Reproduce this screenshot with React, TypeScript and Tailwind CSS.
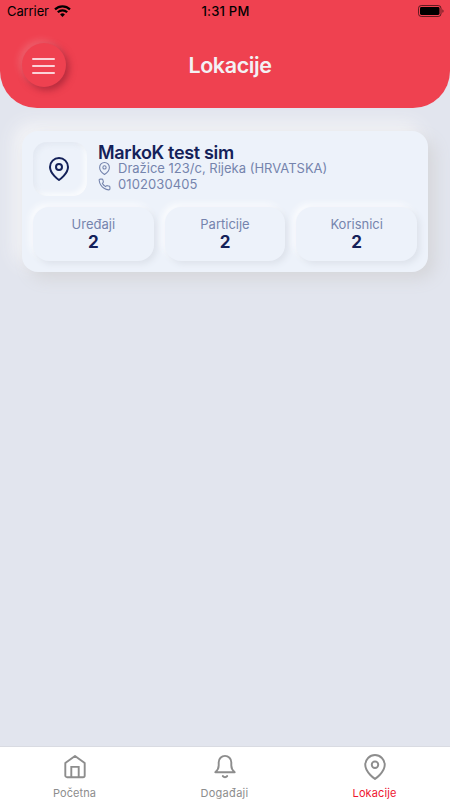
import React from "react";

const stats = [
  { label: "Uređaji", value: 2 },
  { label: "Particije", value: 2 },
  { label: "Korisnici", value: 2 },
];

function Svg({ size, stroke = 2, box = 24, children }: any) {
  return (
    <svg
      width={size}
      height={size}
      viewBox={`0 0 ${box} ${box}`}
      fill="none"
      stroke="currentColor"
      strokeWidth={stroke}
      strokeLinecap="round"
      strokeLinejoin="round"
      className="shrink-0 overflow-visible"
    >
      {children}
    </svg>
  );
}

function Pin({ size, stroke }: any) {
  return (
    <Svg size={size} stroke={stroke}>
      <path d="M21 10c0 7-9 13-9 13s-9-6-9-13a9 9 0 0 1 18 0z" />
      <circle cx="12" cy="10" r="3" />
    </Svg>
  );
}

function Phone({ size, stroke }: any) {
  return (
    <Svg size={size} stroke={stroke}>
      <path d="M22 16.92v3a2 2 0 0 1-2.18 2 19.79 19.79 0 0 1-8.63-3.07 19.5 19.5 0 0 1-6-6 19.79 19.79 0 0 1-3.07-8.67A2 2 0 0 1 4.11 2h3a2 2 0 0 1 2 1.72 12.84 12.84 0 0 0 .7 2.81 2 2 0 0 1-.45 2.11L8.09 9.91a16 16 0 0 0 6 6l1.27-1.27a2 2 0 0 1 2.11-.45 12.84 12.84 0 0 0 2.81.7A2 2 0 0 1 22 16.92z" />
    </Svg>
  );
}

function Home() {
  return (
    <Svg size={26} stroke={1.9} box={26}>
      <path d="M13 1.9L3.3 9.1v12.3a1.8 1.8 0 0 0 1.8 1.8h15.8a1.8 1.8 0 0 0 1.8-1.8V9.1z" />
      <path d="M9.3 23V12.9h7.4V23" strokeLinejoin="miter" />
    </Svg>
  );
}

function Bell() {
  return (
    <Svg size={26} stroke={1.9} box={26}>
      <path d="M3.3 18.2h19.4c-2.1-1.6-3.4-3.4-3.4-6.6V8.2a6.3 6.3 0 0 0-12.6 0v3.4c0 3.2-1.3 5-3.4 6.6z" />
      <path d="M10.9 22.2c1.1 1.4 3.1 1.4 4.2 0" strokeWidth="2.1" />
    </Svg>
  );
}

function StatusBar() {
  return (
    <div className="grid h-[22px] grid-cols-3 items-center pr-[6px] pl-[7px] text-[13px] text-black">
      <div className="flex items-center gap-[5px]">
        <span className="pt-[2px] tracking-[-0.1px]">Carrier</span>
        <svg width="17" height="12" viewBox="0 0 17 12" fill="none" stroke="#000" strokeWidth="2.2">
          <path d="M1 4.4a10.8 10.8 0 0 1 15 0" />
          <path d="M3.8 7.2a6.8 6.8 0 0 1 9.4 0" />
          <path d="M8.5 12L6.1 9.5a3.5 3.5 0 0 1 4.8 0z" fill="#000" stroke="none" />
        </svg>
      </div>
      <span className="pt-[2px] text-center font-medium tracking-[0.2px]">1:31 PM</span>
      <svg className="justify-self-end" width="26" height="12" viewBox="0 0 26 12">
        <rect x="0.5" y="0.5" width="22.5" height="11" rx="2.8" fill="none" stroke="#000" strokeOpacity="0.6" />
        <rect x="2" y="2" width="19.5" height="8" rx="1.4" fill="#000" />
        <path d="M24.5 4.2c1.3.5 1.3 3.1 0 3.6z" fill="#000" fillOpacity="0.7" />
      </svg>
    </div>
  );
}

function Header() {
  return (
    <header className="relative z-10 h-[108px] rounded-b-[37px] bg-[#ef4150]">
      <StatusBar />
      <div className="flex h-[86px] items-center px-[22px]">
        <button
          type="button"
          className="flex h-11 w-11 flex-col items-center justify-center gap-[5px] rounded-full bg-[#ef4150] pr-px pt-px shadow-[3px_3px_7px_rgba(120,20,40,0.5),-3px_-3px_7px_rgba(255,255,255,0.17)]"
        >
          <span className="h-[2px] w-[23px] rounded-full bg-[#fbd3d8]"></span>
          <span className="h-[2px] w-[23px] rounded-full bg-[#fbd3d8]"></span>
          <span className="h-[2px] w-[23px] rounded-full bg-[#fbd3d8]"></span>
        </button>
        <h1 className="flex-1 pr-[34px] text-center text-[21.5px] font-semibold tracking-[-0.4px] text-[#f3f1f4]">
          Lokacije
        </h1>
      </div>
    </header>
  );
}

function LocationCard() {
  return (
    <div className="mx-[22px] mt-[23px] h-[141px] rounded-2xl bg-[#edf2fa] p-[11px] shadow-[7px_7px_16px_#d5d6da,-7px_-7px_18px_#f6f6f8]">
      <div className="flex gap-[11px]">
        <div className="flex h-[54px] w-[54px] items-center justify-center rounded-[14px] pr-[2px] text-[#142159] shadow-[inset_3px_3px_5px_rgba(205,212,226,0.3),inset_-3px_-3px_5px_rgba(255,255,255,0.7)]">
          <Pin size={24} stroke={2} />
        </div>
        <div className="flex flex-col whitespace-nowrap text-[#7584ad]">
          <p className="mt-[2px] h-4 text-[18px] leading-[18px] font-semibold tracking-[-0.33px] text-[#142159]">
            MarkoK test sim
          </p>
          <div className="flex h-4 items-center gap-[7px] text-[13px] leading-4">
            <Pin size={13} stroke={2} />
            <span>Dražice 123/c, Rijeka (HRVATSKA)</span>
          </div>
          <div className="flex h-4 items-center gap-[7px] text-[13px] leading-4 tracking-[0.1px]">
            <Phone size={13} stroke={2} />
            <span>0102030405</span>
          </div>
        </div>
      </div>
      <div className="mt-[11px] grid grid-cols-3 gap-[11px]">
        {stats.map((item) => (
          <div
            key={item.label}
            className="flex h-[54px] flex-col items-center justify-center rounded-2xl bg-[#edf2fa] pb-[2px] shadow-[3px_3px_6px_#dde2eb,-3px_-3px_6px_#fbfcfe]"
          >
            <span className="text-[13px] leading-[18px] text-[#7584ad]">{item.label}</span>
            <span className="text-[17px] leading-[18px] font-bold text-[#142159]">{item.value}</span>
          </div>
        ))}
      </div>
    </div>
  );
}

function TabBar() {
  return (
    <nav className="grid h-[53px] grid-cols-3 bg-white text-[11px] text-[#8d8d8d] shadow-[0_-1px_0_#d9dbe2]">
      <div className="flex flex-col items-center pt-[7px] pr-px">
        <Home />
        <span className="mt-[5px] leading-[16px] tracking-[0.1px]">Početna</span>
      </div>
      <div className="flex flex-col items-center pt-[7px] pr-px">
        <Bell />
        <span className="mt-[5px] leading-[16px] tracking-[0.3px]">Događaji</span>
      </div>
      <div className="flex flex-col items-center pt-[7px] pr-px">
        <Pin size={26} stroke={1.8} />
        <span className="mt-[5px] leading-[16px] tracking-[0.1px] text-[#ee1430]">Lokacije</span>
      </div>
    </nav>
  );
}

function App() {
  return (
    <div className="flex h-[800px] w-[450px] flex-col overflow-hidden bg-[#e2e5ee] font-['Inter',sans-serif]">
      <Header />
      <main className="flex-1">
        <LocationCard />
      </main>
      <TabBar />
    </div>
  );
}

export default App;
